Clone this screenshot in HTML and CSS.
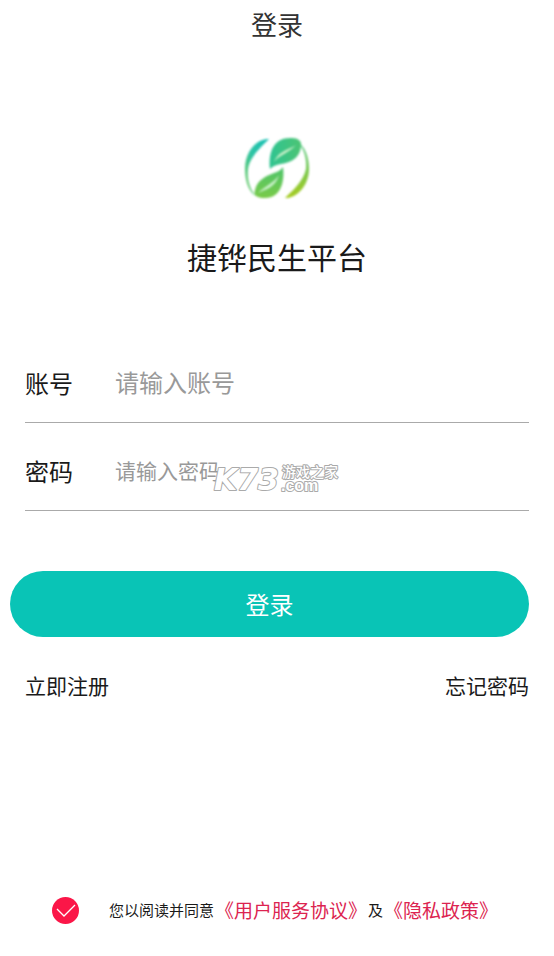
FILE: index.html
```html
<!DOCTYPE html>
<html lang="zh-CN">
<head>
<meta charset="utf-8">
<meta name="viewport" content="width=device-width, initial-scale=1">
<title>登录</title>
<link rel="stylesheet" href="styles.css">
</head>
<body>
<header class="topbar"><h1 class="topbar-title">登录</h1></header>
<main class="page">
  <section class="brand">
    <svg class="brand-logo" viewBox="0 0 66 64" aria-hidden="true">
      <defs>
        <linearGradient id="arcLeft" x1="1" y1="0" x2="0" y2="1">
          <stop offset="0" stop-color="#14c0b4"/><stop offset=".5" stop-color="#2fc4a4"/><stop offset="1" stop-color="#7acc54"/>
        </linearGradient>
        <linearGradient id="arcRight" x1="0" y1="0" x2="0" y2="1">
          <stop offset="0" stop-color="#48c47c"/><stop offset="1" stop-color="#a8cc20"/>
        </linearGradient>
        <linearGradient id="leafTop" x1="0" y1="0" x2="1" y2="0">
          <stop offset="0" stop-color="#2fc492"/><stop offset="1" stop-color="#4cc474"/>
        </linearGradient>
        <linearGradient id="leafBottom" x1="0" y1="0" x2="0" y2="1">
          <stop offset="0" stop-color="#4cc46c"/><stop offset="1" stop-color="#7acb48"/>
        </linearGradient>
      </defs>
      <path fill="url(#arcLeft)" d="M25 2C15 1 1 12 1 32C1 46 6 56 12 59C5 51 3 42 4 32C6 20 16 11 25 2Z"/>
      <path fill="url(#arcRight)" d="M54 5C61 10 65 20 65 32C65 50 51 62 41 61C48 54 59 45 62 32C63 21 60 12 54 5Z"/>
      <path fill="url(#leafTop)" d="M26 32C24 13 31 0 48 1C54 1 58 4 57 9C56 22 45 26 37 27C32 28 29 29 26 32Z"/>
      <path fill="url(#leafBottom)" d="M39 30C41 46 36 62 20 61C14 61 9 59 11 53C13 43 22 39 30 36C34 35 37 33 39 30Z"/>
      <path class="leaf-vein" d="M30 25C35 18 45 16 52 8C47 12 35 13 30 25ZM35 38C30 46 22 48 14 56C21 53 32 50 35 38Z"/>
    </svg>
    <h2 class="brand-name">捷铧民生平台</h2>
  </section>
  <form class="login">
    <div class="field">
      <label class="field-label" for="account">账号</label>
      <input class="field-input" id="account" type="text" placeholder="请输入账号">
    </div>
    <div class="field">
      <label class="field-label" for="password">密码</label>
      <input class="field-input field-input-small" id="password" type="password" placeholder="请输入密码">
      <svg class="watermark" viewBox="0 0 128 32" aria-hidden="true">
        <text class="mark-name" x="1" y="27">K73</text>
        <text class="mark-cn" x="69" y="14">游戏之家</text>
        <text class="mark-com" x="68" y="28">.com</text>
      </svg>
    </div>
    <button class="submit" type="button">登录</button>
    <nav class="links">
      <a class="link" href="#register">立即注册</a>
      <a class="link" href="#forgot">忘记密码</a>
    </nav>
  </form>
</main>
<footer class="agreement">
  <input class="agree-box" id="agree" type="checkbox" checked>
  <div class="agree-text">
    <label for="agree">您以阅读并同意</label>
    <a class="policy" href="#terms">《用户服务协议》</a>
    <span>及</span>
    <a class="policy" href="#privacy">《隐私政策》</a>
  </div>
</footer>
</body>
</html>
```
FILE: styles.css
```css
* {
  box-sizing: border-box;
}

body {
  display: flex;
  flex-direction: column;
  min-height: 100vh;
  margin: 0;
  background: #fff;
  color: #1a1a1a;
  font-family: "Noto Sans CJK SC", sans-serif;
}

.topbar {
  text-align: center;
}

.topbar-title {
  margin: 0;
  color: #333;
  font-size: 26px;
  font-weight: 400;
  line-height: 48px;
}

.page {
  flex: 1;
}

.brand {
  display: flex;
  flex-direction: column;
  align-items: center;
  gap: 30px;
  padding-top: 89px;
}

.brand-logo {
  width: 66px;
  height: 64px;
  filter: blur(1px);
}

.leaf-vein {
  fill: #c8f0c8;
}

.brand-name {
  margin: 0;
  font-size: 30px;
  font-weight: 400;
  line-height: 50px;
}

.login {
  padding: 54px 25px 0;
}

.field {
  position: relative;
  display: flex;
  align-items: center;
  height: 88px;
  padding-top: 8px;
  border-bottom: 1px solid #aaa;
}

.field-label {
  width: 90px;
  flex: none;
  font-size: 24px;
  line-height: 36px;
}

.field-input {
  flex: 1;
  min-width: 0;
  height: 46px;
  padding: 0 0 2px;
  border: 0;
  outline: 0;
  background: transparent;
  color: #1a1a1a;
  font: 24px "Noto Sans CJK SC", sans-serif;
}

.field-input-small {
  font-size: 21px;
}

.field-input::placeholder {
  color: #999;
  opacity: 1;
}

.watermark {
  position: absolute;
  top: 40px;
  left: 188px;
  width: 128px;
  height: 32px;
  overflow: visible;
  pointer-events: none;
}

.watermark text {
  fill: #fff;
  stroke: #aaa;
  stroke-width: 2px;
  stroke-linejoin: round;
  paint-order: stroke;
}

.mark-name {
  font: italic 700 30px "DejaVu Sans", sans-serif;
}

.mark-cn {
  font: 500 14px "Noto Sans CJK SC", sans-serif;
}

.mark-com {
  font: 700 16px "Liberation Sans", sans-serif;
}

.submit {
  display: block;
  width: calc(100% + 15px);
  height: 66px;
  margin: 60px 0 0 -15px;
  padding: 0 0 2px;
  border: 0;
  border-radius: 33px;
  background: #09c4b6;
  color: #fff;
  font: 24px "Noto Sans CJK SC", sans-serif;
}

.links {
  display: flex;
  justify-content: space-between;
  padding-top: 32px;
}

.link {
  color: inherit;
  font-size: 21px;
  line-height: 32px;
  text-decoration: none;
}

.agreement {
  display: flex;
  align-items: center;
  gap: 30px;
  padding: 0 52px 29px;
}

.agree-box {
  width: 27px;
  height: 27px;
  flex: none;
  margin: 0;
  appearance: none;
  border-radius: 50%;
  background: #fb1648 url("data:image/svg+xml,%3Csvg xmlns='http://www.w3.org/2000/svg' viewBox='0 0 27 27'%3E%3Cpath d='M5 12l7 7L23 8' fill='none' stroke='white' stroke-width='1.3'/%3E%3C/svg%3E");
}

.agree-text {
  display: flex;
  align-items: center;
  gap: 1px;
  font-size: 15px;
  line-height: 34px;
  white-space: nowrap;
}

.policy {
  color: #dc2450;
  font-size: 19px;
  text-decoration: none;
}
```
